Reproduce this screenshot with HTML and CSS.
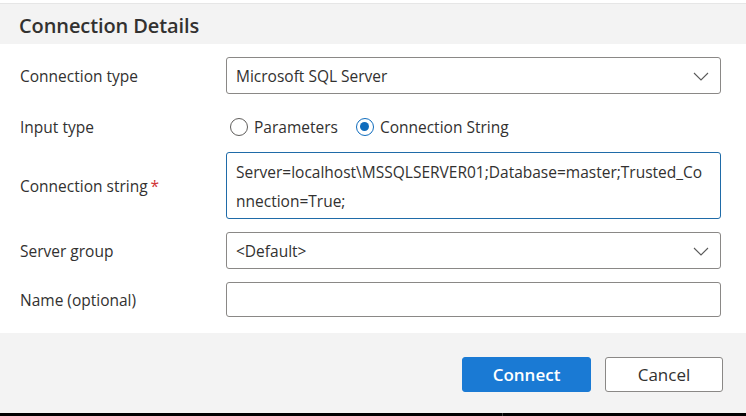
FILE: index.html
```html
<!DOCTYPE html>
<html lang="en">
<head>
<meta charset="utf-8">
<title>Connection Details</title>
<link rel="stylesheet" href="styles.css">
</head>
<body>
<div class="dialog">
  <div class="top-strip"></div>
  <header class="header"><h1 class="title">Connection Details</h1></header>
  <main class="body">
    <div class="row row-select">
      <label class="label">Connection type</label>
      <div class="control select">
        <span class="select-text">Microsoft SQL Server</span>
        <svg class="chevron" width="16" height="9" viewBox="0 0 16 9"><path d="M1 1 L8 8 L15 1" fill="none" stroke="#5a5a5a" stroke-width="1.1"/></svg>
      </div>
    </div>
    <div class="row row-radio">
      <span class="label">Input type</span>
      <div class="radios">
        <label class="radio"><span class="circle"></span><span>Parameters</span></label>
        <label class="radio"><span class="circle checked"></span><span>Connection String</span></label>
      </div>
    </div>
    <div class="row row-text">
      <label class="label">Connection string<span class="req">*</span></label>
      <div class="control textarea">Server=localhost\MSSQLSERVER01;Database=master;Trusted_Connection=True;</div>
    </div>
    <div class="row row-select">
      <label class="label">Server group</label>
      <div class="control select">
        <span class="select-text">&lt;Default&gt;</span>
        <svg class="chevron" width="16" height="9" viewBox="0 0 16 9"><path d="M1 1 L8 8 L15 1" fill="none" stroke="#5a5a5a" stroke-width="1.1"/></svg>
      </div>
    </div>
    <div class="row row-input">
      <label class="label">Name (optional)</label>
      <div class="control input"></div>
    </div>
  </main>
  <footer class="footer">
    <button class="btn btn-primary">Connect</button>
    <button class="btn btn-secondary">Cancel</button>
  </footer>
  <div class="bottom-bar"><span class="divider"></span></div>
</div>
</body>
</html>
```

FILE: styles.css
```css
* { box-sizing: border-box; }
html, body { margin: 0; padding: 0; background: #ffffff; }
body {
  font-family: "Open Sans", "Noto Sans", "Liberation Sans", sans-serif;
  color: #323130;
}
.dialog {
  width: 746px;
  height: 416px;
  display: flex;
  flex-direction: column;
  overflow: hidden;
}
.top-strip { height: 3px; background: #ffffff; flex: none; }
.header {
  height: 41px;
  flex: none;
  background: #f3f3f3;
  border-top: 1px solid #e6e6e6;
  display: flex;
  align-items: center;
  padding: 2px 0 0 19px;
}
.title {
  margin: 0;
  font-size: 20px;
  font-weight: 600;
  color: #323130;
  letter-spacing: -0.1px;
}
.body {
  flex: none;
  height: 289px;
  padding: 13px 25px 0 20px;
  display: flex;
  flex-direction: column;
  gap: 13px;
  background: #ffffff;
}
.row {
  display: grid;
  grid-template-columns: 206px 1fr;
  align-items: center;
}
.label {
  font-size: 15.5px;
  color: #323130;
}
.req { color: #d13438; margin-left: 3px; }
.control {
  border: 1px solid #8a8886;
  border-radius: 3px;
  background: #fff;
  font-size: 15.5px;
  color: #323130;
}
.row-select .control { height: 37px; }
.select {
  display: flex;
  align-items: center;
  justify-content: space-between;
  padding: 0 11px 0 9px;
}
.chevron { display: block; margin-top: 2px; }
.row-radio { height: 32px; padding-top: 7px; }
.radios { display: flex; align-items: center; gap: 18px; padding-left: 4px; }
.radio { display: flex; align-items: center; gap: 6px; font-size: 15.5px; }
.circle {
  width: 18px;
  height: 18px;
  border: 1px solid #605e5c;
  border-radius: 50%;
  display: inline-block;
  position: relative;
}
.circle.checked { border: 1.5px solid #0f6cbd; }
.circle.checked::after {
  content: "";
  position: absolute;
  left: 3px; top: 3px;
  width: 9px; height: 9px;
  border-radius: 50%;
  background: #0f6cbd;
}
.textarea {
  height: 67px;
  border-color: #1f6ba8;
  padding: 5px 12px 0 9px;
  line-height: 29px;
  word-break: break-all;
}
.input { height: 35px; }
.footer {
  flex: none;
  height: 80px;
  background: #f3f3f3;
  display: flex;
  justify-content: flex-end;
  align-items: flex-start;
  padding: 24px 23px 0 0;
  gap: 14px;
}
.btn {
  height: 35px;
  border-radius: 3px;
  font-family: inherit;
  font-size: 17px;
  font-weight: 600;
}
.btn-primary {
  width: 129px;
  background: #1a7ad4;
  border: 1px solid #1a7ad4;
  color: #fff;
}
.btn-secondary {
  width: 118px;
  background: #fff;
  border: 1px solid #8a8886;
  color: #323130;
  font-weight: 400;
}
.bottom-bar {
  flex: 1;
  background: #000;
  position: relative;
}
.divider {
  position: absolute;
  left: 502px;
  top: 0;
  width: 1px;
  height: 100%;
  background: #3a3a3a;
}
```
